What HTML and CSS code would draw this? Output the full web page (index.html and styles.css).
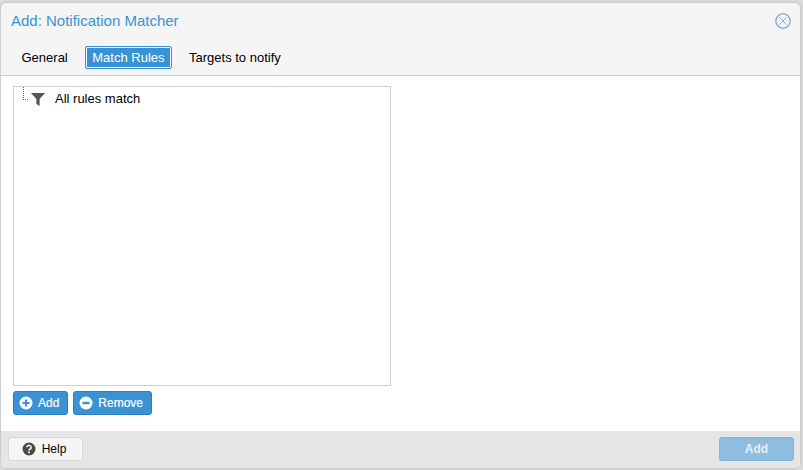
FILE: index.html
```html
<!DOCTYPE html>
<html lang="en">
<head>
<meta charset="utf-8">
<title>Add: Notification Matcher</title>
<link rel="stylesheet" href="styles.css">
</head>
<body>
<div class="window">
  <header class="title-bar">
    <span class="title">Add: Notification Matcher</span>
    <svg class="close" viewBox="0 0 16 16" width="16" height="16" aria-label="Close">
      <circle cx="8" cy="8" r="7.2" fill="none" stroke="#5b9fd6" stroke-width="1.1"/>
      <path d="M4.3 4.3 11.7 11.7M11.7 4.3 4.3 11.7" fill="none" stroke="#7db3de" stroke-width="1"/>
    </svg>
  </header>
  <nav class="tabs">
    <span class="tab">General</span>
    <span class="tab active">Match Rules</span>
    <span class="tab">Targets to notify</span>
  </nav>
  <main class="content">
    <div class="tree">
      <div class="tree-row">
        <span class="elbow"></span>
        <svg class="filter" viewBox="0 0 14 14" width="14" height="14"><path d="M0 1h14L8.6 7v7L5.4 12V7z" fill="#555"/></svg>
        <span>All rules match</span>
      </div>
    </div>
    <div class="actions">
      <button class="btn primary">
        <svg viewBox="0 0 14 14" width="14" height="14"><circle cx="7" cy="7" r="6.5" fill="#fff"/><path d="M3.5 7h7M7 3.5v7" stroke="#3892d4" stroke-width="2.2"/></svg>
        Add
      </button>
      <button class="btn primary">
        <svg viewBox="0 0 14 14" width="14" height="14"><circle cx="7" cy="7" r="6.5" fill="#fff"/><path d="M3.5 7h7" stroke="#3892d4" stroke-width="2.4"/></svg>
        Remove
      </button>
    </div>
  </main>
  <footer class="footer">
    <button class="btn help">
      <svg viewBox="0 0 14 14" width="14" height="14"><circle cx="7" cy="7" r="6.5" fill="#4a4a4a"/><path d="M4.9 5.3a2.1 2 0 1 1 3.3 1.7c-.8.5-1.2.8-1.2 1.6" fill="none" stroke="#f5f5f5" stroke-width="1.6"/><rect x="6.1" y="9.5" width="1.8" height="1.7" fill="#f5f5f5"/></svg>
      Help
    </button>
    <button class="btn submit">Add</button>
  </footer>
</div>
</body>
</html>
```
FILE: styles.css
```css
* { box-sizing: border-box; }
html, body { height: 100%; }
body {
  margin: 0;
  background: #dcdcdc;
  font-family: "Liberation Sans", Arial, sans-serif;
  font-size: 13px;
  color: #000;
  padding: 3px 3px 2px 1px;
  overflow: hidden;
}
.window {
  height: 465px;
  display: flex;
  flex-direction: column;
  background: #f5f5f5;
  border-radius: 5px;
  overflow: hidden;
  box-shadow: 0 0 3px rgba(0,0,0,.18);
}
.title-bar {
  height: 35px;
  flex: none;
  display: flex;
  align-items: center;
  justify-content: space-between;
  padding: 0 9px 1px 10px;
}
.title { font-size: 15px; color: #3892d4; }
.close { display: block; margin-top: 2px; }
.tabs {
  height: 38px;
  flex: none;
  display: flex;
  gap: 10.5px;
  padding: 8px 0 0 13.5px;
  border-bottom: 1px solid #cfcfcf;
  align-items: flex-start;
}
.tab {
  height: 23px;
  line-height: 21px;
  padding: 0 6px;
  font-size: 13px;
  border: 1px solid transparent;
  border-radius: 2px;
}
.tab.active {
  background: #3892d4;
  color: #fff;
  border-color: #3892d4;
  box-shadow: inset 0 0 0 1px #fff;
}
.content {
  flex: 1;
  min-height: 0;
  background: #fff;
  padding: 10px 12px 16px;
  display: flex;
  flex-direction: column;
}
.tree {
  width: 378px;
  height: 300px;
  flex: none;
  border: 1px solid #cfcfcf;
  background: #fff;
}
.tree-row {
  display: flex;
  align-items: center;
  height: 23px;
  padding-left: 9px;
  color: #000;
}
.elbow {
  width: 5px;
  height: 13px;
  margin: -10px 3px 0 0;
  border-left: 1px dotted #666;
  border-bottom: 1px dotted #666;
}
.filter { margin-right: 10px; }
.actions {
  display: flex;
  gap: 5px;
  margin-top: 5px;
}
.btn {
  height: 24px;
  display: inline-flex;
  align-items: center;
  justify-content: center;
  gap: 5px;
  font: 12px "Liberation Sans", Arial, sans-serif;
  border-radius: 3px;
  padding: 0;
}
.primary {
  background: #3892d4;
  border: 1px solid #2a7fc0;
  color: #fff;
  padding: 0 8px 0 5px;
  gap: 5px;
  -webkit-text-stroke: 0.2px #fff;
}
.footer {
  height: 37px;
  flex: none;
  background: #e5e5e5;
  display: flex;
  justify-content: space-between;
  padding: 6px 6px 0 7px;
}
.help {
  width: 75px;
  background: #f5f5f5;
  border: 1px solid #d8d8d8;
  color: #000;
  gap: 6px;
  padding-right: 3px;
}
.submit {
  width: 75px;
  background: #8ebde0;
  border: 1px solid #83b5da;
  color: #e6f0f8;
  font-weight: bold;
}
```
